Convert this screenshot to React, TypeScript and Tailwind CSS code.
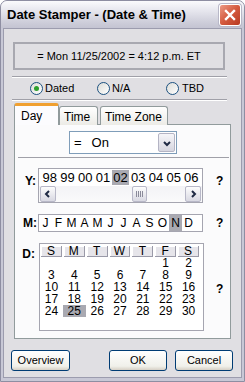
import React from "react";

function Radio({ checked }: { checked?: boolean }) {
  return (
    <div className="w-[13px] h-[13px] rounded-full border border-[#1c5180] bg-[linear-gradient(135deg,#dcdcd7,#ffffff)] flex items-center justify-center">
      {checked && <div className="w-[5px] h-[5px] rounded-full bg-[#2da02d]" />}
    </div>
  );
}

function Chevron({ dir }: { dir: "left" | "right" | "down" }) {
  const d =
    dir === "left" ? "M6 2 L3 5 L6 8" : dir === "right" ? "M4 2 L7 5 L4 8" : "M2 4 L5 7 L8 4";
  return (
    <svg width="10" height="10" viewBox="0 0 10 10">
      <path d={d} fill="none" stroke="#1f2a44" strokeWidth="2" />
    </svg>
  );
}

function Btn({ w, label, ml }: { w: string; label: string; ml: string }) {
  return (
    <div
      className={`${w} ${ml} h-[21px] rounded-[3px] border border-[#003c74] bg-[linear-gradient(#ffffff,#f0f0ea_80%,#d6d0c5)] flex items-center justify-center text-[11px]`}
    >
      {label}
    </div>
  );
}

export default function App() {
  const years = ["98", "99", "00", "01", "02", "03", "04", "05", "06"];
  const months = "JFMAMJJASOND".split("");
  const heads = ["S", "M", "T", "W", "T", "F", "S"];
  const rows: (number | null)[][] = [
    [null, null, null, null, null, 1, 2],
    [3, 4, 5, 6, 7, 8, 9],
    [10, 11, 12, 13, 14, 15, 16],
    [17, 18, 19, 20, 21, 22, 23],
    [24, 25, 26, 27, 28, 29, 30],
  ];
  return (
    <div className="w-[245px] h-[382px] flex flex-col bg-[#c8c8d6] rounded-t-[7px] overflow-hidden font-['Liberation_Sans',Arial,sans-serif] text-black border border-[#8e8ea2]">
      {/* title bar */}
      <div className="h-[27px] flex items-center bg-[linear-gradient(#fbfbfd,#e4e4ec_40%,#cdcdd9_80%,#c4c4d2)] pl-[6px] pr-[3px]">
        <div className="text-[13px] font-bold tracking-[0px] flex-1">Date Stamper - (Date &amp; Time)</div>
        <div className="w-[22px] h-[22px] rounded-[3px] border border-white bg-[linear-gradient(135deg,#ec9a85,#d45a3e_50%,#b83a22)] flex items-center justify-center shadow-[0_0_0_1px_#b8b8c8]">
          <svg width="12" height="12" viewBox="0 0 12 12">
            <path d="M2 2 L10 10 M10 2 L2 10" stroke="#fff" strokeWidth="2.4" strokeLinecap="square" />
          </svg>
        </div>
      </div>
      {/* body */}
      <div className="flex-1 mx-[2px] mb-[3px] bg-[#e0dfe3] border border-[#9c9cae] flex flex-col">
        <div className="mt-[13px] ml-[9px] w-[212px] h-[28px] border-2 border-[#a8a8b0] flex items-center justify-center text-[11px]">
          = Mon 11/25/2002 = 4:12 p.m. ET
        </div>
        <div className="mt-[6px] ml-[8px] w-[215px] h-px bg-[#a0a0a8] shadow-[0_1px_0_#ffffff]" />
        <div className="mt-[2px] h-[18px] flex items-center pl-[26px] text-[11px]">
          <div className="w-[67px] flex items-center gap-[2px]">
            <Radio checked />
            <span>Dated</span>
          </div>
          <div className="w-[69px] flex items-center gap-[2px]">
            <Radio />
            <span>N/A</span>
          </div>
          <div className="flex items-center gap-[3px]">
            <Radio />
            <span>TBD</span>
          </div>
        </div>
        <div className="mt-[2px] ml-[8px] w-[215px] h-px bg-[#a0a0a8] shadow-[0_1px_0_#ffffff]" />
        {/* tabs */}
        <div className="mt-[3px] ml-[10px] flex items-end relative z-10 -mb-px text-[12px]">
          <div className="w-[45px] h-[22px] bg-[#fcfcfe] border-x border-[#919b9c] rounded-t-[3px] border-t-[3px] border-t-[#f0a030] pl-[6px] pt-[1px]">
            Day
          </div>
          <div className="w-[39px] h-[19px] bg-[linear-gradient(#ffffff,#ecebe6)] border border-b-0 border-[#919b9c] rounded-t-[3px] pl-[4px] pt-[1px]">
            Time
          </div>
          <div className="ml-[2px] w-[68px] h-[19px] bg-[linear-gradient(#ffffff,#ecebe6)] border border-b-0 border-[#919b9c] rounded-t-[3px] pl-[4px] pt-[1px]">
            Time Zone
          </div>
        </div>
        <div className="ml-[10px] w-[217px] h-[215px] border border-[#919b9c] bg-[#fbfbfc] flex flex-col">
          {/* select */}
          <div className="mt-[6px] ml-[54px] w-[108px] h-[23px] border border-[#7f9db9] bg-white flex items-center text-[13px]">
            <span className="ml-[4px]">=</span>
            <span className="ml-[10px] flex-1">On</span>
            <div className="w-[17px] h-[19px] mr-[1px] rounded-[2px] border border-[#b4b4c4] bg-[linear-gradient(#f6f6f9,#d6d6e0)] flex items-center justify-center">
              <Chevron dir="down" />
            </div>
          </div>
          <div className="mt-[3px] ml-[3px] w-[211px] h-px bg-[#a0a0a8]" />
          {/* Y row */}
          <div className="mt-[10px] flex items-start">
            <div className="w-[23px] pr-[2px] text-right text-[12px] font-bold mt-[4px]">Y:</div>
            <div className="w-[165px] h-[35px] border border-[#a5a5b0] bg-white flex flex-col">
              <div className="h-[17px] pl-[2px] pt-[1px] flex">
                {years.map((y) => (
                  <div
                    key={y}
                    className={`w-[17.7px] h-[15px] flex items-center justify-center text-[13px] ${y === "02" ? "bg-[#a9a9b1]" : ""}`}
                  >
                    {y}
                  </div>
                ))}
              </div>
              <div className="h-[16px] flex items-center bg-[linear-gradient(#f3f3f6,#fafafb)] px-[1px]">
                <div className="w-[16px] h-[16px] rounded-[2px] border border-[#b8b8c8] bg-[linear-gradient(#fdfdfd,#d8d8e2)] flex items-center justify-center">
                  <Chevron dir="left" />
                </div>
                <div className="ml-[76px] w-[15px] h-[16px] rounded-[2px] border border-[#b8b8c8] bg-[linear-gradient(#fdfdfd,#d8d8e2)] flex items-center justify-center gap-[1px]">
                  <div className="w-px h-[6px] bg-[#8a8a9a]" />
                  <div className="w-px h-[6px] bg-[#8a8a9a]" />
                  <div className="w-px h-[6px] bg-[#8a8a9a]" />
                  <div className="w-px h-[6px] bg-[#8a8a9a]" />
                </div>
                <div className="ml-auto w-[16px] h-[16px] rounded-[2px] border border-[#b8b8c8] bg-[linear-gradient(#fdfdfd,#d8d8e2)] flex items-center justify-center">
                  <Chevron dir="right" />
                </div>
              </div>
            </div>
            <div className="ml-[13px] mt-[4px] text-[12px] font-bold">?</div>
          </div>
          {/* M row */}
          <div className="mt-[11px] flex items-center">
            <div className="w-[23px] pr-[1px] text-right text-[12px] font-bold">M:</div>
            <div className="w-[165px] h-[18px] border border-[#a5a5b0] bg-white flex items-center">
              {months.map((m, i) => (
                <div
                  key={i}
                  className={`w-[13px] h-[16px] flex items-center justify-center text-[12px] ${i === 10 ? "bg-[#a9a9b1]" : ""}`}
                >
                  {m}
                </div>
              ))}
            </div>
            <div className="ml-[13px] text-[12px] font-bold">?</div>
          </div>
          {/* D row */}
          <div className="mt-[11px] flex items-start">
            <div className="w-[24px] pr-[4px] text-right text-[12px] font-bold mt-[2px]">D:</div>
            <div className="w-[165px] h-[88px] border border-[#a5a5b0] bg-white pt-[2px]">
              <div className="grid grid-cols-7 w-[160px] h-[11px]">
                {heads.map((h, i) => (
                  <div
                    key={i}
                    className="mx-[1px] h-[11px] bg-[#e6e5ea] border-r border-b border-[#9a9aa8] shadow-[inset_1px_1px_0_#ffffff] flex items-center justify-center text-[12px] leading-none"
                  >
                    {h}
                  </div>
                ))}
              </div>
              {rows.map((r, ri) => (
                <div key={ri} className="grid grid-cols-7 w-[160px] h-[12px]">
                  {r.map((d, di) => (
                    <div
                      key={di}
                      className={`h-[12px] flex items-center justify-center text-[12px] leading-none ${d === 25 ? "bg-[#a9a9b1]" : ""}`}
                    >
                      {d ?? ""}
                    </div>
                  ))}
                </div>
              ))}
            </div>
            <div className="ml-[12px] mt-[37px] text-[12px] font-bold">?</div>
          </div>
        </div>
        {/* buttons */}
        <div className="mt-[11px] flex">
          <Btn w="w-[59px]" ml="ml-[7px]" label="Overview" />
          <Btn w="w-[58px]" ml="ml-[39px]" label="OK" />
          <Btn w="w-[58px]" ml="ml-[8px]" label="Cancel" />
        </div>
      </div>
    </div>
  );
}
